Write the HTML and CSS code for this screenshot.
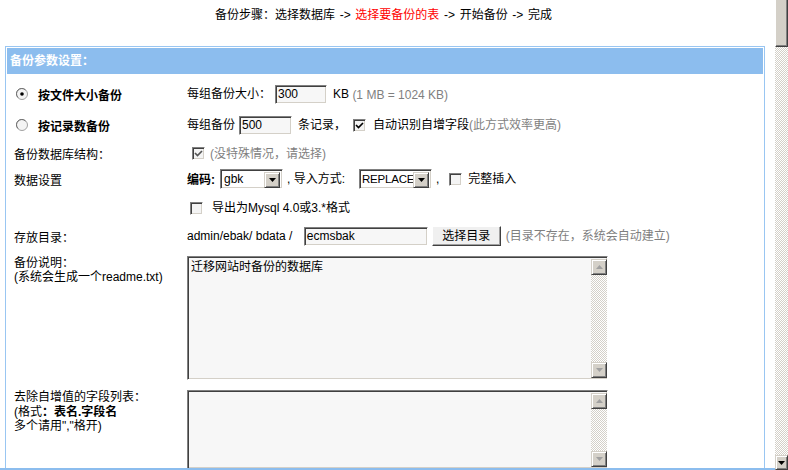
FILE: index.html
```html
<!DOCTYPE html>
<html>
<head>
<meta charset="utf-8">
<title>备份参数设置</title>
<link rel="stylesheet" href="styles.css">
</head>
<body>
<div class="page">
  <div class="main">
    <div class="steps">备份步骤：选择数据库 -&gt; <span class="red">选择要备份的表</span> -&gt; 开始备份 -&gt; 完成</div>
    <div class="tbl">
      <div class="head">备份参数设置：</div>
      <div class="body">
        <div class="row r1">
          <div class="lc"><span class="radio"><svg width="12" height="12" viewBox="0 0 12 12"><circle cx="6" cy="6" r="5.5" fill="#f4f4f4" stroke="#a0a0a0"/><path d="M2 9.5A5 5 0 0 1 9.5 2" fill="none" stroke="#707070"/><circle cx="6" cy="6" r="1.8" fill="#000"/></svg></span><b>按文件大小备份</b></div>
          <div class="rc">每组备份大小：<span class="inp w52">300</span><span class="kb">KB</span> <span class="gray">(1 MB = 1024 KB)</span></div>
        </div>
        <div class="row r2">
          <div class="lc"><span class="radio"><svg width="12" height="12" viewBox="0 0 12 12"><circle cx="6" cy="6" r="5.5" fill="#f4f4f4" stroke="#a0a0a0"/><path d="M2 9.5A5 5 0 0 1 9.5 2" fill="none" stroke="#707070"/></svg></span><b>按记录数备份</b></div>
          <div class="rc">每组备份<span class="inp w53">500</span><span class="t1">条记录，</span><span class="cb cb-rec"><svg width="9" height="9" viewBox="0 0 9 9"><path d="M1 4l2.5 2.5L8 2" fill="none" stroke="#000" stroke-width="1.7"/></svg></span><span class="t2">自动识别自增字段<span class="gray">(此方式效率更高)</span></span></div>
        </div>
        <div class="row r3">
          <div class="lc">备份数据库结构：</div>
          <div class="rc"><span class="cb cb-str"><svg width="9" height="9" viewBox="0 0 9 9"><path d="M1 4l2.5 2.5L8 2" fill="none" stroke="#555" stroke-width="1.7"/></svg></span><span class="gray">(没特殊情况，请选择)</span></div>
        </div>
        <div class="row r4">
          <div class="lc">数据设置</div>
          <div class="rc"><b>编码:</b><span class="sel w63"><span class="sv">gbk</span><span class="arr"><svg width="7" height="4" viewBox="0 0 7 4"><path d="M0 0h7L3.5 4z" fill="#000"/></svg></span></span><span class="t3">, 导入方式:</span><span class="sel w73"><span class="sv">REPLACE</span><span class="arr"><svg width="7" height="4" viewBox="0 0 7 4"><path d="M0 0h7L3.5 4z" fill="#000"/></svg></span></span><span class="t4">,</span><span class="cb cb-full"></span><span class="t5">完整插入</span></div>
        </div>
        <div class="row r4b">
          <div class="lc"></div>
          <div class="rc"><span class="cb cb-old"></span><span class="t6">导出为Mysql 4.0或3.*格式</span></div>
        </div>
        <div class="row r5">
          <div class="lc">存放目录：</div>
          <div class="rc">admin/ebak/ bdata / <span class="inp w124">ecmsbak</span><span class="btn">选择目录</span><span class="gray t7">(目录不存在，系统会自动建立)</span></div>
        </div>
        <div class="row r6">
          <div class="lc lines">备份说明：<br>(系统会生成一个readme.txt)</div>
          <div class="rc">
            <div class="ta h124">
              <div class="tatext">迁移网站时备份的数据库</div>
              <div class="tasb">
                <span class="sbtn"><svg width="7" height="4" viewBox="0 0 7 4"><path d="M0 4h7L3.5 0z" fill="#a0a0a0"/></svg></span>
                <span class="track"></span>
                <span class="sbtn"><svg width="7" height="4" viewBox="0 0 7 4"><path d="M0 0h7L3.5 4z" fill="#a0a0a0"/></svg></span>
              </div>
            </div>
          </div>
        </div>
        <div class="row r7">
          <div class="lc lines2">去除自增值的字段列表：<br>(格式<b>：表名.字段名</b><br>多个请用","格开)</div>
          <div class="rc">
            <div class="ta h79">
              <div class="tatext"></div>
              <div class="tasb">
                <span class="sbtn"><svg width="7" height="4" viewBox="0 0 7 4"><path d="M0 4h7L3.5 0z" fill="#a0a0a0"/></svg></span>
                <span class="track"></span>
                <span class="sbtn"><svg width="7" height="4" viewBox="0 0 7 4"><path d="M0 0h7L3.5 4z" fill="#a0a0a0"/></svg></span>
              </div>
            </div>
          </div>
        </div>
      </div>
    </div>
  </div>
  <div class="vscroll">
    <span class="thumb"></span>
    <span class="vtrack"></span>
    <span class="vbtn"><svg width="7" height="4" viewBox="0 0 7 4"><path d="M0 0h7L3.5 4z" fill="#000"/></svg></span>
  </div>
</div>
</body>
</html>
```
FILE: styles.css
```css
html, body {
  margin: 0;
  padding: 0;
  background: #fff;
}
body {
  font: 12px "Liberation Sans", "Noto Sans CJK SC", sans-serif;
  color: #000;
  overflow: hidden;
}
b { font-weight: bold; }

.page {
  display: flex;
  height: 470px;
}
.main {
  flex: 1;
  height: 470px;
  box-sizing: border-box;
  overflow: hidden;
  border-bottom: 2px solid #8cbdee;
}
.steps {
  height: 30px;
  line-height: 30px;
  text-align: center;
  padding-right: 8px;
  margin-bottom: 16px;
  word-spacing: 1.3px;
}
.red { color: #ff0000; }
.gray { color: #7f7f7f; }

.tbl {
  margin-left: 5px;
  width: 760px;
  box-sizing: border-box;
  border: 1px solid #99c6f2;
  border-bottom: none;
  padding: 1px 1px 0 1px;
  height: 500px;
}
.head {
  height: 26px;
  line-height: 26px;
  background: #8cbdee;
  color: #fff;
  font-weight: bold;
  padding-left: 3px;
}
.body { padding-top: 2px; }

.row {
  display: flex;
  align-items: center;
}
.lc {
  width: 180px;
  flex: none;
  box-sizing: border-box;
  padding-left: 7px;
  display: flex;
  align-items: center;
}
.rc {
  flex: 1;
  white-space: nowrap;
  line-height: 20px;
}
.rc > span, .rc > b { vertical-align: middle; }

.r1 { height: 36px; }
.r2 { height: 26px; }
.r3 { height: 30px; }
.r4 { height: 22px; }
.r4b { height: 36px; }
.r5 { height: 20px; }
.r6 { align-items: flex-start; padding-top: 10px; }
.r7 { align-items: flex-start; padding-top: 10px; }

.radio {
  display: inline-flex;
  width: 12px;
  height: 12px;
  margin-left: 2px;
  margin-right: 10px;
}

.inp {
  display: inline-block;
  height: 19px;
  line-height: 15px;
  box-sizing: border-box;
  border-style: solid;
  border-width: 1px;
  border-color: #808080 #ffffff #ffffff #808080;
  box-shadow: inset 1px 1px 0 #404040, inset -1px -1px 0 #d4d0c8;
  background: #f7f7f7;
  padding: 1px 0 0 2px;
  font-size: 12px;
}
.w52 { width: 52px; margin-left: 4px; }
.w53 { width: 53px; margin-left: 4px; }
.w124 { width: 124px; margin-left: 8px; }
.kb { margin-left: 6px; }

.t1 { margin-left: 6px; }
.cb {
  display: inline-flex;
  align-items: center;
  justify-content: center;
  width: 13px;
  height: 13px;
  box-sizing: border-box;
  border: 1px solid;
  border-color: #808080 #ffffff #ffffff #808080;
  box-shadow: inset 1px 1px 0 #404040, inset -1px -1px 0 #d4d0c8;
  background: #f4f4f4;
}
.cb-rec { margin-left: 7px; }
.t2 { margin-left: 7px; }
.cb-str { margin-left: 5px; margin-right: 5px; }

.sel {
  display: inline-flex;
  height: 20px;
  box-sizing: border-box;
  border: 1px solid;
  border-color: #808080 #ffffff #ffffff #808080;
  box-shadow: inset 1px 1px 0 #404040, inset -1px -1px 0 #d4d0c8;
  background: #fff;
  padding: 2px;
}
.w63 { width: 63px; margin-left: 5px; }
.w73 { width: 73px; margin-left: 14px; }
.sv {
  flex: 1;
  line-height: 15px;
  padding-left: 1px;
  overflow: hidden;
}
.w73 .sv { font-size: 11.5px; padding-left: 0; letter-spacing: -0.2px; }
.arr {
  width: 16px;
  height: 16px;
  flex: none;
  box-sizing: border-box;
  background: #d4d0c8;
  border: 1px solid;
  border-color: #d4d0c8 #404040 #404040 #d4d0c8;
  box-shadow: inset 1px 1px 0 #fff, inset -1px -1px 0 #808080;
  display: inline-flex;
  align-items: center;
  justify-content: center;
}
.t3 { margin-left: 4px; }
.t4 { margin-left: 4px; }
.cb-full { margin-left: 10px; }
.t5 { margin-left: 6px; }
.cb-old { margin-left: 3px; }
.t6 { margin-left: 9px; }

.btn {
  display: inline-block;
  width: 69px;
  height: 20px;
  line-height: 18px;
  box-sizing: border-box;
  text-align: center;
  margin-left: 4px;
  background: #f0f0f0;
  border: 1px solid;
  border-color: #ffffff #404040 #404040 #ffffff;
  box-shadow: inset -1px -1px 0 #a0a0a0;
}
.t7 { margin-left: 5px; }

.lines { display: block; line-height: 14px; padding-top: 0; }
.lines2 { display: block; line-height: 14.5px; }

.ta {
  width: 421px;
  box-sizing: border-box;
  border: 1px solid;
  border-color: #808080 #ffffff #ffffff #808080;
  box-shadow: inset 1px 1px 0 #404040, inset -1px -1px 0 #d4d0c8;
  background: #f7f7f7;
  padding: 2px 0 1px 2px;
  display: flex;
}
.h124 { height: 124px; }
.h79 { height: 79px; }
.tatext {
  flex: 1;
  line-height: 15px;
  padding: 1px 0 0 1px;
}
.tasb {
  width: 16px;
  display: flex;
  flex-direction: column;
}
.sbtn {
  height: 16px;
  flex: none;
  box-sizing: border-box;
  background: #d4d0c8;
  border: 1px solid;
  border-color: #d4d0c8 #404040 #404040 #d4d0c8;
  box-shadow: inset 1px 1px 0 #fff, inset -1px -1px 0 #808080;
  display: flex;
  align-items: center;
  justify-content: center;
}
.track {
  flex: 1;
  background: repeating-conic-gradient(#ffffff 0 25%, #d4d0c8 0 50%) 0 0 / 2px 2px;
}

.vscroll {
  width: 13px;
  flex: none;
  display: flex;
  flex-direction: column;
  background: repeating-conic-gradient(#ffffff 0 25%, #d4d0c8 0 50%) 0 0 / 2px 2px;
}
.thumb {
  height: 47px;
  box-sizing: border-box;
  background: #d4d0c8;
  border-left: 1px solid #fff;
  border-bottom: 1px solid #404040;
  border-right: 1px solid #404040;
  box-shadow: inset -1px -1px 0 #808080;
}
.vtrack { flex: 1; }
.vbtn {
  height: 15px;
  box-sizing: border-box;
  background: #d4d0c8;
  border: 1px solid;
  border-color: #d4d0c8 #404040 #404040 #d4d0c8;
  box-shadow: inset 1px 1px 0 #fff, inset -1px -1px 0 #808080;
  display: flex;
  align-items: center;
  justify-content: center;
}
```
